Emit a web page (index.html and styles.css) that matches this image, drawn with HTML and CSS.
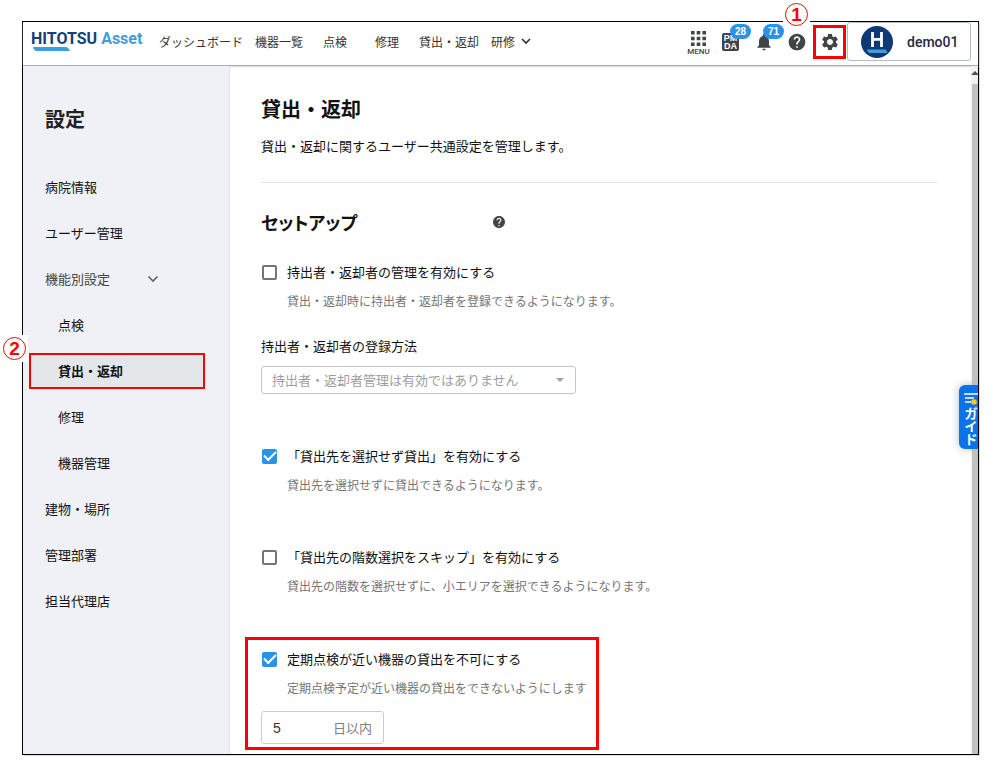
FILE: index.html
```html
<!DOCTYPE html>
<html lang="ja">
<head>
<meta charset="utf-8">
<meta name="viewport" content="width=device-width, initial-scale=1">
<title>HITOTSU Asset 設定</title>
<link rel="stylesheet" href="styles.css">
</head>
<body>
<div class="stage">
  <div class="frame">
    <header class="topbar">
      <a class="logo" href="#">
        <span class="logo-main">HITOTSU</span> <span class="logo-sub">Asset</span>
        <svg class="logo-line" viewBox="0 0 37 4" aria-hidden="true"><path d="M0 0H33Q35 0 37 4H4Q1 4 0 0Z" fill="#3c9fdc"/></svg>
      </a>
      <nav class="topnav">
        <a href="#">ダッシュボード</a>
        <a href="#">機器一覧</a>
        <a href="#">点検</a>
        <a href="#">修理</a>
        <a href="#">貸出・返却</a>
        <a href="#">研修
          <svg width="10" height="7" viewBox="0 0 10 7" aria-hidden="true"><path d="M1 1l4 4 4-4" fill="none" stroke="#333" stroke-width="1.7"/></svg>
        </a>
      </nav>
      <div class="tools">
        <button class="tool menu" type="button">
          <svg width="15" height="15" viewBox="0 0 15 15" aria-hidden="true"><path fill="#424548" d="M0 0h3.6v3.6H0zM5.7 0h3.6v3.6H5.7zM11.4 0H15v3.6h-3.6zM0 5.7h3.6v3.6H0zM5.7 5.7h3.6v3.6H5.7zM11.4 5.7H15v3.6h-3.6zM0 11.4h3.6V15H0zM5.7 11.4h3.6V15H5.7zM11.4 11.4H15V15h-3.6z"/></svg>
          <span>MENU</span>
        </button>
        <button class="tool" type="button" aria-label="PMDA">
          <span class="pmda"><span>PM</span><span>DA</span></span>
          <span class="badge">28</span>
        </button>
        <button class="tool" type="button" aria-label="通知">
          <svg width="20" height="20" viewBox="0 0 24 24" aria-hidden="true"><path fill="#424548" d="M12 22c1.1 0 2-.9 2-2h-4c0 1.1.9 2 2 2zm6-6v-5c0-3.07-1.63-5.64-4.5-6.32V4c0-.83-.67-1.5-1.5-1.5s-1.500.67-1.500 1.500v.68C7.640 5.360 6 7.920 6 11v5l-2 2v1h16v-1l-2-2z"/></svg>
          <span class="badge">71</span>
        </button>
        <button class="tool" type="button" aria-label="ヘルプ">
          <svg width="20" height="20" viewBox="0 0 24 24" aria-hidden="true"><path fill="#424548" d="M12 2C6.480 2 2 6.480 2 12s4.480 10 10 10 10-4.480 10-10S17.520 2 12 2zm1 17h-2v-2h2v2zm2.070-7.750l-.9.920C13.450 12.900 13 13.500 13 15h-2v-.5c0-1.100.450-2.100 1.170-2.830l1.240-1.260c.370-.360.590-.860.590-1.410 0-1.100-.9-2-2-2s-2 .9-2 2H8c0-2.210 1.790-4 4-4s4 1.790 4 4c0 .880-.360 1.680-.930 2.250z"/></svg>
        </button>
        <button class="tool marked" type="button" aria-label="設定">
          <svg width="20" height="20" viewBox="0 0 24 24" aria-hidden="true"><path fill="#424548" d="M19.140 12.940c.040-.3.060-.610.060-.940 0-.320-.020-.640-.070-.940l2.030-1.580c.180-.140.230-.410.120-.610l-1.920-3.320c-.120-.220-.370-.290-.590-.220l-2.390.960c-.5-.380-1.030-.7-1.620-.940l-.360-2.540c-.040-.240-.240-.410-.480-.410h-3.840c-.240 0-.430.170-.470.410l-.360 2.540c-.590.240-1.130.570-1.620.940l-2.390-.960c-.220-.080-.470 0-.590.220L2.740 8.870c-.120.210-.080.470.120.610l2.030 1.580c-.050.3-.090.630-.090.940s.020.640.070.940l-2.030 1.580c-.180.140-.230.410-.120.610l1.920 3.320c.120.220.370.290.590.220l2.390-.960c.5.380 1.030.7 1.620.940l.360 2.540c.050.240.240.410.480.410h3.840c.240 0 .440-.170.470-.410l.360-2.540c.590-.240 1.130-.560 1.620-.940l2.390.960c.220.080.470 0 .590-.220l1.920-3.320c.120-.220.070-.470-.120-.610l-2.010-1.580zM12 15.600c-1.980 0-3.600-1.620-3.600-3.600s1.620-3.600 3.600-3.600 3.600 1.620 3.600 3.600-1.620 3.600-3.600 3.600z"/></svg>
        </button>
        <button class="profile" type="button">
          <svg width="32" height="32" viewBox="0 0 32 32" aria-hidden="true"><circle cx="16" cy="16" r="16" fill="#0d3a73"/><path d="M11.500 6v15M20.500 6v15M11.500 13.300h9" fill="none" stroke="#fff" stroke-width="2.800"/><path d="M6 23.500h18q1.500 0 2.500 3.500H9q-2 0-3-3.500z" fill="#3c9fdc"/></svg>
          <span>demo01</span>
        </button>
      </div>
    </header>
    <div class="body">
      <aside class="sidebar">
        <h2 class="side-title">設定</h2>
        <nav class="side-nav">
          <a href="#">病院情報</a>
          <a href="#">ユーザー管理</a>
          <a class="parent" href="#">機能別設定
            <svg width="12" height="8" viewBox="0 0 12 8" aria-hidden="true"><path d="M1.500 1.500L6 6l4.500-4.500" fill="none" stroke="#666" stroke-width="1.700"/></svg>
          </a>
          <a class="sub" href="#">点検</a>
          <a class="sub active" href="#" aria-current="page">貸出・返却</a>
          <a class="sub" href="#">修理</a>
          <a class="sub" href="#">機器管理</a>
          <a href="#">建物・場所</a>
          <a href="#">管理部署</a>
          <a href="#">担当代理店</a>
        </nav>
      </aside>
      <main class="main">
        <h1>貸出・返却</h1>
        <p class="lead">貸出・返却に関するユーザー共通設定を管理します。</p>
        <hr>
        <div class="section-head">
          <h2>セットアップ</h2>
          <svg width="12" height="12" viewBox="2 2 20 20" aria-hidden="true"><path fill="#424548" d="M12 2C6.480 2 2 6.480 2 12s4.480 10 10 10 10-4.480 10-10S17.520 2 12 2zm1 17h-2v-2h2v2zm2.070-7.750l-.9.920C13.450 12.900 13 13.500 13 15h-2v-.5c0-1.100.450-2.100 1.170-2.830l1.240-1.260c.370-.360.590-.860.590-1.410 0-1.100-.9-2-2-2s-2 .9-2 2H8c0-2.210 1.790-4 4-4s4 1.790 4 4c0 .880-.360 1.680-.930 2.250z"/></svg>
        </div>
        <section class="setting">
          <label class="check"><input type="checkbox"><span>持出者・返却者の管理を有効にする</span></label>
          <p class="help">貸出・返却時に持出者・返却者を登録できるようになります。</p>
          <label class="field-label" for="method">持出者・返却者の登録方法</label>
          <div class="select-wrap">
            <select id="method" disabled><option>持出者・返却者管理は有効ではありません</option></select>
            <svg width="8" height="4" viewBox="0 0 8 4" aria-hidden="true"><path d="M0 0h8L4 4z" fill="#a3a3a3"/></svg>
          </div>
        </section>
        <section class="setting">
          <label class="check"><input type="checkbox" checked><span>「貸出先を選択せず貸出」を有効にする</span></label>
          <p class="help">貸出先を選択せずに貸出できるようになります。</p>
        </section>
        <section class="setting">
          <label class="check"><input type="checkbox"><span>「貸出先の階数選択をスキップ」を有効にする</span></label>
          <p class="help">貸出先の階数を選択せずに、小エリアを選択できるようになります。</p>
        </section>
        <section class="setting marked-setting">
          <label class="check"><input type="checkbox" checked><span>定期点検が近い機器の貸出を不可にする</span></label>
          <p class="help">定期点検予定が近い機器の貸出をできないようにします</p>
          <div class="days"><input id="days" type="text" inputmode="numeric" value="5"><label for="days">日以内</label></div>
        </section>
      </main>
      <div class="scrollbar" aria-hidden="true">
        <svg width="7" height="4" viewBox="0 0 7 4"><path d="M0 4L4 0l3 3v1z" fill="#505050"/></svg>
        <div class="thumb"></div>
      </div>
    </div>
    <div class="guide-clip">
      <button class="guide" type="button">
        <svg width="14" height="12" viewBox="0 0 14 12" aria-hidden="true"><path d="M0 1h14M1 5h9M1 9h6" stroke="#fff" stroke-width="1.500"/><circle cx="10" cy="9" r="2.800" fill="#fbc52d"/></svg>
        <span>ガイド</span>
      </button>
    </div>
  </div>
  <div class="callout one"><span>1</span></div>
  <div class="callout two"><span>2</span></div>
</div>
</body>
</html>
```
FILE: styles.css
```css
* { box-sizing: border-box; }

body {
  margin: 0;
  background: #fff;
  color: #111;
  font: 13px/20px "Noto Sans CJK JP", sans-serif;
}

h1, h2, p { margin: 0; }
a { color: inherit; text-decoration: none; }
button { padding: 0; border: 0; background: none; font: inherit; color: inherit; cursor: pointer; }
svg { display: block; flex: none; }

.stage {
  position: relative;
  display: flex;
  min-height: 100vh;
  padding: 21px 24px 7px 22px;
}

.frame {
  position: relative;
  flex: 1;
  display: flex;
  flex-direction: column;
  border: 1px solid #000;
  box-shadow: 1px 1px 0 #ddd;
}

/* Top bar */
.topbar {
  display: flex;
  align-items: center;
  height: 44px;
  padding: 0 7px 4px 8px;
  border-bottom: 1px solid #adadad;
  box-shadow: 0 1px 1px #ddd;
}

.logo {
  position: relative;
  margin-right: 12px;
  width: 110px;
  padding-bottom: 5px;
  font: bold 16px/18px Roboto, sans-serif;
  white-space: nowrap;
}
.logo-main { color: #164178; }
.logo-sub { color: #3c9fdc; }
.logo-line { position: absolute; left: 2px; bottom: 2px; width: 37px; height: 4px; }

.topnav { display: flex; font-size: 12px; color: #333; white-space: nowrap; }
.topnav a {
  display: flex;
  align-items: center;
  justify-content: center;
  gap: 6px;
  min-width: 52px;
  padding: 0 6px;
}

.tools { display: flex; align-items: center; margin-left: auto; }
.tool {
  position: relative;
  display: flex;
  flex-direction: column;
  align-items: center;
  justify-content: center;
  width: 33px;
  height: 34px;
}
.menu { gap: 2px; width: 31px; padding-top: 4px; font: 500 8px/8px Roboto, sans-serif; color: #424548; }
.pmda {
  display: flex;
  flex-direction: column;
  align-items: center;
  width: 17px;
  padding: 1px 0;
  border-radius: 2px;
  background: #424548;
  color: #fff;
  font: bold 9px/8px "Liberation Sans", sans-serif;
}
.badge {
  position: absolute;
  left: 16px;
  top: -1px;
  width: 21px;
  border-radius: 8px;
  background: #2a93e8;
  color: #fff;
  font: bold 10px/15px "Liberation Sans", sans-serif;
  z-index: 1;
}
.marked { border: 3px solid #f00; }

.profile {
  display: flex;
  align-items: center;
  gap: 14px;
  width: 124px;
  height: 39px;
  margin-left: 1px;
  padding: 0 13px;
  border: 1px solid #b4bacb;
  border-radius: 3px;
  color: #1f2a44;
  font: 500 14px/20px Roboto, sans-serif;
}

/* Body */
.body { flex: 1; display: flex; }

.sidebar {
  flex: none;
  width: 207px;
  padding: 39px 24px 20px 6px;
  border-right: 1px solid #e0e2e7;
  background: #eff1f6;
}
.side-title { padding-left: 16px; font-size: 20px; line-height: 28px; font-weight: 700; color: #222; }
.side-nav { display: flex; flex-direction: column; gap: 10px; margin-top: 36px; }
.side-nav a { display: flex; align-items: center; height: 36px; padding-left: 16px; }
.side-nav .parent { gap: 37px; color: #444; }
.side-nav .sub { padding-left: 29px; }
.side-nav .active {
  padding-left: 27px;
  border: 2px solid #f00;
  background: #e3e7ea;
  font-weight: 700;
}

.main { flex: 1; min-width: 0; padding: 29px 34px 4px 31px; }
h1 { font-size: 20px; line-height: 28px; }
.lead { margin-top: 13px; }
hr { height: 1px; margin: 26px 0 25px; border: 0; background: #e4e4e4; }

.section-head { display: flex; align-items: center; justify-content: space-between; width: 244px; }
.section-head h2 { font-size: 18px; line-height: 28px; font-feature-settings: "palt"; }

.setting { margin-top: 52px; }
.section-head + .setting { margin-top: 26px; }

.check { display: flex; align-items: center; gap: 10px; padding-left: 1px; }
.check input {
  appearance: none;
  width: 15px;
  height: 15px;
  margin: 0;
  border: 2px solid #757575;
  border-radius: 2px;
  background: #fff;
}
.check input:checked {
  display: grid;
  place-items: center;
  border-color: #2a93e8;
  background: #2a93e8;
}
.check input:checked::before {
  content: "";
  width: 10px;
  height: 5px;
  margin-bottom: 3px;
  border: solid #fff;
  border-width: 0 0 2px 2px;
  transform: rotate(-45deg);
}
.help { margin-top: 9px; padding-left: 26px; font-size: 12px; color: #757575; }

.field-label { display: block; margin-top: 25px; }
.select-wrap {
  display: flex;
  align-items: center;
  width: 315px;
  margin-top: 10px;
  padding-right: 11px;
  border: 1px solid #c4c4c4;
  border-radius: 3px;
}
.select-wrap select {
  appearance: none;
  flex: 1;
  height: 26px;
  padding: 0 10px;
  border: 0;
  background: none;
  font: inherit;
  color: #9e9e9e;
  opacity: 1;
}

.marked-setting {
  width: 354px;
  margin: 41px 0 0 -16px;
  padding: 9px 0 3px 13px;
  border: 3px solid #f00;
}
.days {
  display: flex;
  align-items: center;
  justify-content: space-between;
  width: 123px;
  height: 33px;
  margin-top: 13px;
  padding: 0 11px;
  border: 1px solid #ccc;
  border-radius: 3px;
  color: #808080;
}
.days input {
  width: 50px;
  padding: 0;
  border: 0;
  font: 14px/20px "Liberation Sans", sans-serif;
  color: #333;
}

.scrollbar { display: flex; flex-direction: column; flex: none; width: 7px; padding-top: 5px; background: #f1f1f1; }
.thumb { flex: 1; margin: 9px 0 0 1px; background: #c1c1c1; }

/* Floating guide tab, cut off by the frame edge */
.guide-clip {
  position: absolute;
  right: 0;
  top: 353px;
  padding: 10px 0 10px 10px;
  overflow: hidden;
}
.guide {
  display: flex;
  flex-direction: column;
  align-items: center;
  width: 24px;
  height: 64px;
  margin-right: -5px;
  padding-top: 8px;
  gap: 1px;
  border-radius: 6px 0 0 6px;
  background: #0b72ea;
  box-shadow: 0 0 8px #bbb;
  color: #fff;
  font-size: 13px;
  font-weight: 700;
  line-height: 13px;
}
.guide span { width: 13px; }

/* Numbered callouts over the frame */
.callout {
  position: absolute;
  padding: 2px;
  background: #fff;
  color: #f00;
  font: bold 19px/21px "Liberation Sans", sans-serif;
  text-align: center;
}
.callout span { display: block; width: 23px; height: 23px; border: 1px solid #f00; border-radius: 50%; }
.one { right: 193px; top: 1px; padding-bottom: 0; }
.two { left: 1px; top: 335px; }
```
